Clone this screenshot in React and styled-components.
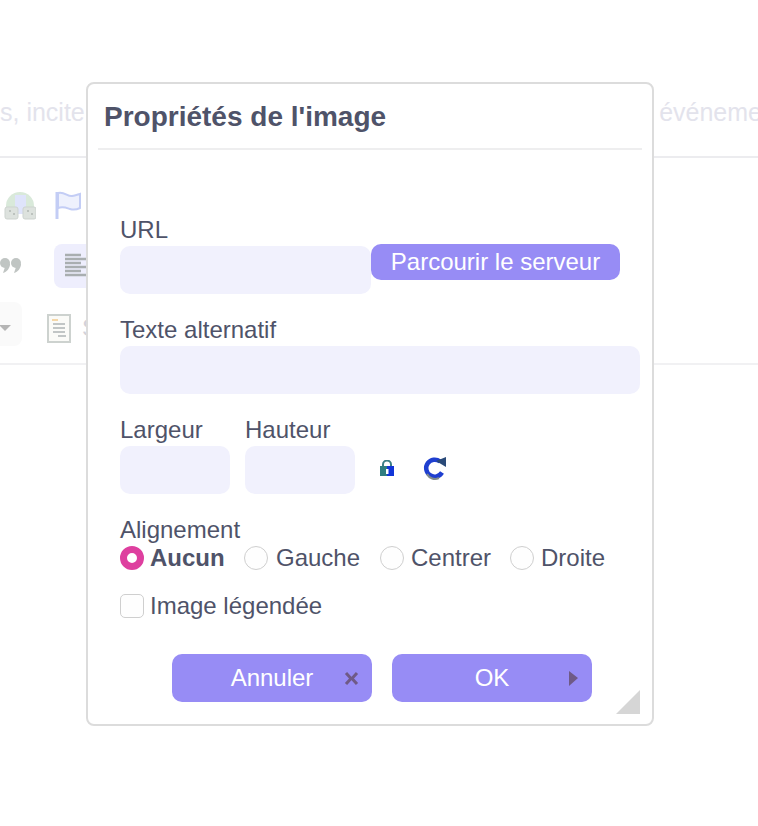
import React from 'react'
import styled, { createGlobalStyle } from 'styled-components'

const GlobalStyle = createGlobalStyle`
  html, body {
    margin: 0;
    padding: 0;
    background: #fff;
  }
  * {
    box-sizing: border-box;
  }
`

const Page = styled.div`
  position: relative;
  width: 758px;
  height: 826px;
  overflow: hidden;
  font-family: 'Liberation Sans', Arial, sans-serif;
  color: #4f5369;
`

const Backdrop = styled.div`
  display: flex;
  flex-direction: column;
  padding-top: 98px;
  height: 365px;
  border-bottom: 2px solid #f1f1f3;
`

const Intro = styled.div`
  display: flex;
  justify-content: space-between;
  flex: none;
  height: 60px;
  border-bottom: 2px solid #ececef;
  font-size: 25px;
  line-height: 28px;
  color: #e3e3ec;
`

const IntroEnd = styled.span`
  margin-right: -4px;
`

const ToolRow = styled.div`
  display: flex;
  align-items: center;
  flex: none;
  height: ${p => p.$h}px;
  padding-top: ${p => p.$top || 0}px;
  padding-left: ${p => p.$pad || 0}px;
  gap: ${p => p.$gap || 0}px;
`

const ToolButton = styled.div`
  display: flex;
  align-items: center;
  justify-content: center;
  flex: none;
  width: ${p => p.$w}px;
  height: 44px;
  margin-left: ${p => p.$ml || 0}px;
  border-radius: 8px;
  background: ${p => p.$bg};
`

const ToolText = styled.span`
  margin: 8px 0 0 -14px;
  font-size: 24px;
  color: #d2d2da;
`

const Dialog = styled.div`
  position: absolute;
  left: 86px;
  top: 82px;
  width: 568px;
  height: 644px;
  background: #fff;
  border: 2px solid #dcdcdc;
  border-radius: 8px;
  padding: 0 10px;
`

const Title = styled.h2`
  margin: 0;
  height: 66px;
  padding: 17px 0 0 6px;
  font-size: 28px;
  line-height: 32px;
  font-weight: 700;
  color: #4f5369;
  border-bottom: 2px solid #eeeeef;
`

const Form = styled.form`
  display: flex;
  flex-direction: column;
  padding: 66px 0 0 22px;
`

const Label = styled.label`
  display: block;
  height: 30px;
  font-size: 24px;
  line-height: 28px;
`

const Row = styled.div`
  display: flex;
  align-items: flex-start;
  gap: ${p => p.$gap || 0}px;
  margin-top: ${p => p.$mt || 0}px;
`

const Field = styled.div`
  display: flex;
  flex-direction: column;
`

const Input = styled.input`
  display: block;
  width: ${p => p.$w}px;
  height: 48px;
  border: 0;
  border-radius: 10px;
  background: #f1f1fd;
`

const ServerButton = styled.button`
  width: 249px;
  height: 36px;
  margin-top: 28px;
  border: 0;
  border-radius: 10px;
  background: #978cf5;
  color: #fff;
  font: 24px 'Liberation Sans', Arial, sans-serif;
  padding: 0;
`

const Icons = styled.div`
  display: flex;
  align-items: center;
  gap: 28px;
  margin: 40px 0 0 9px;
`

const Choices = styled.div`
  display: flex;
  align-items: center;
  height: 24px;
`

const Choice = styled.label`
  display: flex;
  align-items: center;
  width: ${p => p.$w}px;
  font-size: 24px;
  line-height: 24px;
  font-weight: ${p => (p.$on ? 700 : 400)};
`

const Radio = styled.span`
  flex: none;
  width: 24px;
  height: 24px;
  margin-right: ${p => p.$mr}px;
  border-radius: 50%;
  background: ${p => (p.$on ? '#fff' : '#fefefe')};
  border: ${p => (p.$on ? '7px solid #de3f9f' : '1.5px solid #cfcfcf')};
`

const Check = styled.span`
  flex: none;
  width: 24px;
  height: 24px;
  margin-right: 6px;
  border: 1.5px solid #cfcfcf;
  border-radius: 5px;
  background: #fefefe;
`

const Actions = styled.div`
  display: flex;
  gap: 20px;
  margin: 36px 0 0 52px;
`

const ActionButton = styled.button`
  position: relative;
  width: 200px;
  height: 48px;
  border: 0;
  border-radius: 10px;
  background: #978cf5;
  color: #fff;
  font: 24px 'Liberation Sans', Arial, sans-serif;
  padding: 0;
`

const ActionIcon = styled.svg`
  position: absolute;
  right: ${p => p.$right}px;
  top: 17px;
  filter: blur(0.7px);
`

const Grip = styled.div`
  position: absolute;
  right: 12px;
  bottom: 10px;
  width: 24px;
  height: 24px;
  background: #d6d6d6;
  clip-path: polygon(100% 0, 100% 100%, 0 100%);
`

const Blurred = styled.svg`
  display: block;
  flex: none;
  margin-top: ${p => p.$mt || 0}px;
  filter: blur(0.6px);
`

function GlobeIcon() {
  return (
    <Blurred width="32" height="30" viewBox="0 0 32 30">
      <path d="M2 16a14 14 0 0 1 28 0v8H2z" fill="#d9e9da" />
      <path d="M11 5h11v19H11z" fill="#dfe4fb" />
      <rect x="1" y="17" width="13" height="12" rx="2" fill="#dde2de" stroke="#cdd3cf" />
      <rect x="19" y="17" width="13" height="12" rx="2" fill="#dde2de" stroke="#cdd3cf" />
      <path d="M5 21h2M9 24h2M23 21h2M27 24h2" stroke="#bcc2be" strokeWidth="2" />
    </Blurred>
  )
}

function FlagIcon() {
  return (
    <Blurred width="27" height="30" viewBox="0 0 27 30">
      <path d="M2 2v27" stroke="#c3cdf5" strokeWidth="3" />
      <path d="M3 3c6-2 10 4 14 3s5-1 8-2v14c-4 2-7 2-10 1s-7-3-12-1z" fill="#eef1fd" stroke="#c3cdf5" strokeWidth="2" />
    </Blurred>
  )
}

function QuoteIcon() {
  return (
    <Blurred width="22" height="16" viewBox="0 0 22 16">
      <circle cx="5" cy="5" r="5" fill="#c0c5c3" />
      <circle cx="16" cy="5" r="5" fill="#c0c5c3" />
      <path d="M6 6h4c0 4-3 8-7 9zM17 6h4c0 4-3 8-7 9z" fill="#c0c5c3" />
    </Blurred>
  )
}

function LinesIcon() {
  return (
    <Blurred width="22" height="26" viewBox="0 0 22 26">
      <path d="M0 2h16M0 6h22M0 10h16M0 14h22M0 18h16M0 22h22" stroke="#a9aeb0" strokeWidth="2.4" />
    </Blurred>
  )
}

function CaretIcon() {
  return (
    <Blurred $mt={8} width="12" height="6" viewBox="0 0 12 6">
      <path d="M0 0h12L6 6z" fill="#b5b5b5" />
    </Blurred>
  )
}

function DocIcon() {
  return (
    <Blurred $mt={8} width="24" height="29" viewBox="0 0 24 29">
      <rect x="1" y="1" width="22" height="27" fill="#fbfbf8" stroke="#cdd2cf" strokeWidth="2" />
      <path d="M5 6h6" stroke="#f5d7a8" strokeWidth="2" />
      <path d="M6 10h12M6 14h12M6 18h12M11 22h8" stroke="#c2c6c6" strokeWidth="2" />
    </Blurred>
  )
}

function LockIcon() {
  return (
    <Blurred width="16" height="16" viewBox="0 0 16 16">
      <path d="M4 7V4.5a4 4 0 0 1 8 0V7" fill="none" stroke="#3d7f86" strokeWidth="2" />
      <rect x="1" y="6" width="14" height="10" fill="#1235d8" />
      <rect x="1" y="6" width="7" height="10" fill="#2f7d80" />
      <rect x="7" y="9" width="2.5" height="5" fill="#fff" />
    </Blurred>
  )
}

function RefreshIcon() {
  return (
    <Blurred width="24" height="24" viewBox="0 0 24 24">
      <path d="M19 16.5A8.5 8.5 0 1 1 17 5.5" fill="none" stroke="#1f3fd0" strokeWidth="4.5" />
      <path d="M13 5l10-4v10z" fill="#2a4a78" />
      <path d="M4 18a9 9 0 0 0 12 4" fill="none" stroke="#7f8a8a" strokeWidth="2" />
    </Blurred>
  )
}

function App() {
  return (
    <Page>
      <GlobalStyle />
      <Backdrop>
        <Intro>
          <span>s, incite</span>
          <IntroEnd>événeme</IntroEnd>
        </Intro>
        <ToolRow $h={78} $top={16} $pad={4} $gap={19}>
          <GlobeIcon />
          <FlagIcon />
        </ToolRow>
        <ToolRow $h={60} $gap={32}>
          <QuoteIcon />
          <ToolButton $w={44} $bg="#eeeefd">
            <LinesIcon />
          </ToolButton>
        </ToolRow>
        <ToolRow $h={56} $gap={25}>
          <ToolButton $w={34} $ml={-12} $bg="#fafafa">
            <CaretIcon />
          </ToolButton>
          <DocIcon />
          <ToolText>S</ToolText>
        </ToolRow>
      </Backdrop>

      <Dialog>
        <Title>Propriétés de l'image</Title>
        <Form>
          <Row>
            <Field>
              <Label>URL</Label>
              <Input $w={251} />
            </Field>
            <ServerButton type="button">Parcourir le serveur</ServerButton>
          </Row>
          <Row $mt={22}>
            <Field>
              <Label>Texte alternatif</Label>
              <Input $w={520} />
            </Field>
          </Row>
          <Row $mt={22} $gap={15}>
            <Field>
              <Label>Largeur</Label>
              <Input $w={110} />
            </Field>
            <Field>
              <Label>Hauteur</Label>
              <Input $w={110} />
            </Field>
            <Icons>
              <LockIcon />
              <RefreshIcon />
            </Icons>
          </Row>
          <Row $mt={22}>
            <Label>Alignement</Label>
          </Row>
          <Choices>
            <Choice $w={124} $on>
              <Radio $on $mr={6} />
              Aucun
            </Choice>
            <Choice $w={136}>
              <Radio $mr={8} />
              Gauche
            </Choice>
            <Choice $w={130}>
              <Radio $mr={7} />
              Centrer
            </Choice>
            <Choice>
              <Radio $mr={7} />
              Droite
            </Choice>
          </Choices>
          <Row $mt={24}>
            <Choice>
              <Check />
              Image légendée
            </Choice>
          </Row>
          <Actions>
            <ActionButton type="button">
              Annuler
              <ActionIcon $right={13} width="15" height="15" viewBox="0 0 15 15">
                <path d="M2 2l5 5.5-5 5.5M13 2L8 7.5l5 5.5" fill="none" stroke="#6f5a86" strokeWidth="3" />
              </ActionIcon>
            </ActionButton>
            <ActionButton type="button">
              OK
              <ActionIcon $right={14} width="10" height="15" viewBox="0 0 10 15">
                <path d="M1 0l9 7-9 8z" fill="#6f5a86" />
              </ActionIcon>
            </ActionButton>
          </Actions>
        </Form>
        <Grip />
      </Dialog>
    </Page>
  )
}

export default App
